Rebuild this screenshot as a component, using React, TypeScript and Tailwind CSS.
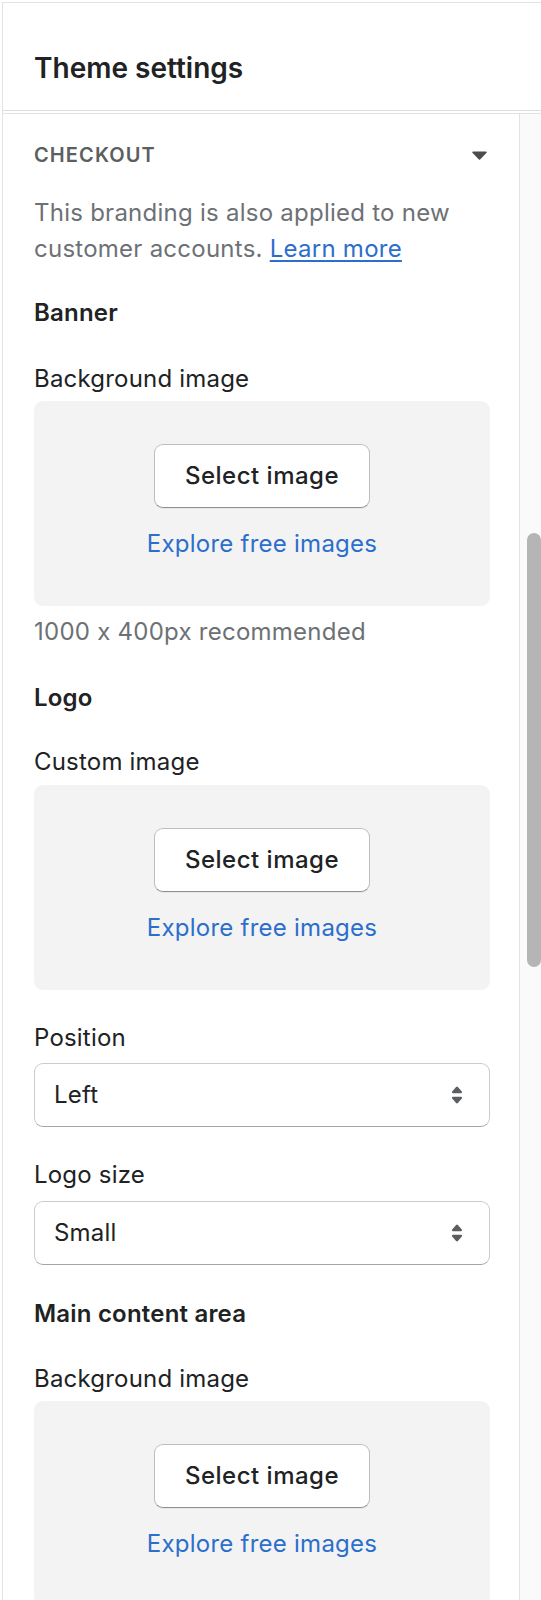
import React from 'react';

const font = { fontFamily: 'Inter, "Noto Sans", sans-serif' };

function ImagePicker({ className = '' }: { className?: string }) {
  return (
    <div className={`flex h-[205px] flex-col items-center rounded-[9px] bg-[#f3f3f3] pt-[43px] ${className}`}>
      <button className="h-[64px] w-[216px] rounded-[9px] border border-[#babfc3] border-b-[#8c9196] bg-white text-[24px] font-medium leading-[36px] tracking-[0.5px] text-[#202223] shadow-[0_1px_0_rgba(0,0,0,0.05)]">
        Select image
      </button>
      <a className="mt-[18px] text-[24px] leading-[36px] tracking-[0.25px] text-[#2c6ecb]">Explore free images</a>
    </div>
  );
}

function SelectArrows() {
  return (
    <svg viewBox="0 0 20 20" className="h-[34px] w-[34px]" fill="#5c5f62">
      <path d="M7.676 9h4.648c.563 0 .879-.603.53-1.014l-2.323-2.746a.708.708 0 0 0-1.062 0l-2.324 2.746c-.347.411-.032 1.014.531 1.014Zm4.648 2h-4.648c-.563 0-.878.603-.53 1.014l2.323 2.746c.27.32.792.32 1.062 0l2.323-2.746c.349-.411.033-1.014-.53-1.014Z" />
    </svg>
  );
}

function Select({ value, className = '' }: { value: string; className?: string }) {
  return (
    <div
      className={`flex h-[64px] items-center justify-between rounded-[9px] border border-[#c9cccf] border-b-[#a3a6a9] bg-white pl-[19px] pr-[15px] ${className}`}
    >
      <span className="text-[24px] leading-[36px] text-[#202223]">{value}</span>
      <SelectArrows />
    </div>
  );
}

export default function App() {
  return (
    <div className="min-h-[1600px] w-[541px] bg-white" style={font}>
      <div className="ml-[2px] mt-[2px] border-l border-t border-[#e1e3e5]">
        {/* header */}
        <div className="h-[108px] border-b border-[#dcdfe2] pl-[31px] pt-[47px]">
          <h1 className="text-[28px] font-semibold leading-[36px] text-[#202223]">Theme settings</h1>
        </div>

        <div className="mt-[2px] flex border-t border-[#e1e3e5]">
          <div className="w-[517px] border-r border-[#e1e3e5] pb-[40px] pl-[31px] pr-[29px] pt-[23px] text-[24px] leading-[36px] tracking-[0.2px] text-[#202223]">
            <div className="flex h-[36px] items-center justify-between">
              <span className="text-[20px] font-semibold uppercase tracking-[1.1px] text-[#5c5f62]">Checkout</span>
              <svg width="15" height="9" viewBox="0 0 15 9" className="mr-[3px]">
                <path d="M1 0.5h13a0.8 0.8 0 0 1 0.6 1.3l-6.5 6.6a0.8 0.8 0 0 1-1.2 0L0.4 1.8A0.8 0.8 0 0 1 1 0.5Z" fill="#4a4d50" />
              </svg>
            </div>

            <p className="mt-[22px] tracking-[0.25px] text-[#6d7175]">
              This branding is also applied to new customer accounts.{' '}
              <a className="text-[#2c6ecb] underline underline-offset-[3px]">Learn more</a>
            </p>

            <h2 className="mt-[28px] font-semibold">Banner</h2>

            <div className="mt-[30px]">Background image</div>
            <ImagePicker className="mt-[4px]" />
            <div className="mt-[8px] tracking-[0.25px] text-[#6d7175] [font-feature-settings:'calt'_0]">
              1000 x 400px recommended
            </div>

            <h2 className="mt-[30px] font-semibold">Logo</h2>

            <div className="mt-[28px]">Custom image</div>
            <ImagePicker className="mt-[5px]" />

            <div className="mt-[30px]">Position</div>
            <Select value="Left" className="mt-[7px]" />

            <div className="mt-[30px]">Logo size</div>
            <Select value="Small" className="mt-[8px]" />

            <h2 className="mt-[31px] font-semibold">Main content area</h2>

            <div className="mt-[29px]">Background image</div>
            <ImagePicker className="mt-[4px]" />
          </div>

          {/* scrollbar track */}
          <div className="flex-1 bg-[#fafafa]">
            <div className="ml-[7px] mt-[419px] h-[434px] w-[14px] rounded-full bg-[#b5b5b5]" />
          </div>
        </div>
      </div>
    </div>
  );
}
